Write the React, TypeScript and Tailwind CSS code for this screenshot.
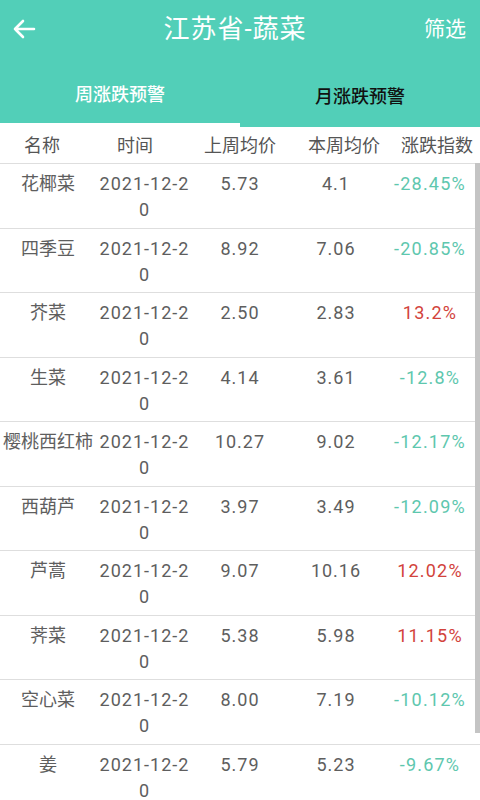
import React from "react";

const rows: [string, string, string, string, boolean][] = [
  ["花椰菜", "5.73", "4.1", "-28.45%", false],
  ["四季豆", "8.92", "7.06", "-20.85%", false],
  ["芥菜", "2.50", "2.83", "13.2%", true],
  ["生菜", "4.14", "3.61", "-12.8%", false],
  ["樱桃西红柿", "10.27", "9.02", "-12.17%", false],
  ["西葫芦", "3.97", "3.49", "-12.09%", false],
  ["芦蒿", "9.07", "10.16", "12.02%", true],
  ["荠菜", "5.38", "5.98", "11.15%", true],
  ["空心菜", "8.00", "7.19", "-10.12%", false],
  ["姜", "5.79", "5.23", "-9.67%", false],
];

const font = { fontFamily: 'Roboto, "Noto Sans CJK SC", sans-serif' };

export default function App() {
  return (
    <div className="w-[480px] h-[800px] overflow-hidden bg-white relative" style={font}>
      <div className="bg-[#52cfb8]">
        <div className="h-[62px] flex items-center px-3 relative">
          <svg width="24" height="22" viewBox="0 0 24 22" className="ml-0 mt-[-4px]">
            <path d="M22 11H3M11 3L3 11L11 19" fill="none" stroke="white" strokeWidth="2.6" strokeLinecap="round" strokeLinejoin="round" />
          </svg>
          <div className="flex-1 text-center text-white text-[26px] leading-none ml-[10px] mt-[-4px] tracking-[1px]">江苏省-蔬菜</div>
          <div className="text-white text-[21px] leading-none mr-[2px] mt-[-4px]">筛选</div>
        </div>
        <div className="h-[65px] flex">
          <div className="w-1/2 flex flex-col">
            <div className="flex-1 flex items-center justify-center text-white text-[18px] font-medium pt-[4px]">周涨跌预警</div>
            <div className="h-[4px] bg-white" />
          </div>
          <div className="w-1/2 flex flex-col">
            <div className="flex-1 flex items-center justify-center text-[#111] text-[18px] font-medium pt-[4px]">月涨跌预警</div>
            <div className="h-[1px]" />
          </div>
        </div>
      </div>
      <div className="flex h-[36px] items-center text-[#555] text-[18px]">
        <div className="w-[84px] text-center">名称</div>
        <div className="w-[102px] text-center">时间</div>
        <div className="w-[108px] text-center">上周均价</div>
        <div className="w-[100px] text-center">本周均价</div>
        <div className="w-[86px] text-center">涨跌指数</div>
      </div>
      <div className="relative">
        {rows.map((r, i) => (
          <div key={i} className="flex h-[64.5px] border-t border-[#dedede] text-[18px] leading-[26px] text-[#5e5e5e] pt-[7px]">
            <div className="w-[96px] text-center whitespace-nowrap">{r[0]}</div>
            <div className="w-[96px] text-center tracking-[1px] pl-[1px]">2021-12-2<br />0</div>
            <div className="w-[96px] text-center tracking-[1px]">{r[1]}</div>
            <div className="w-[96px] text-center tracking-[1px]">{r[2]}</div>
            <div className={"w-[92px] text-center tracking-[1.2px] " + (r[4] ? "text-[#d2433c]" : "text-[#5ec7ae]")}>{r[3]}</div>
          </div>
        ))}
        <div className="absolute right-0 top-0 w-[5px] h-[570px] bg-[#c4c4c4]" />
      </div>
    </div>
  );
}
